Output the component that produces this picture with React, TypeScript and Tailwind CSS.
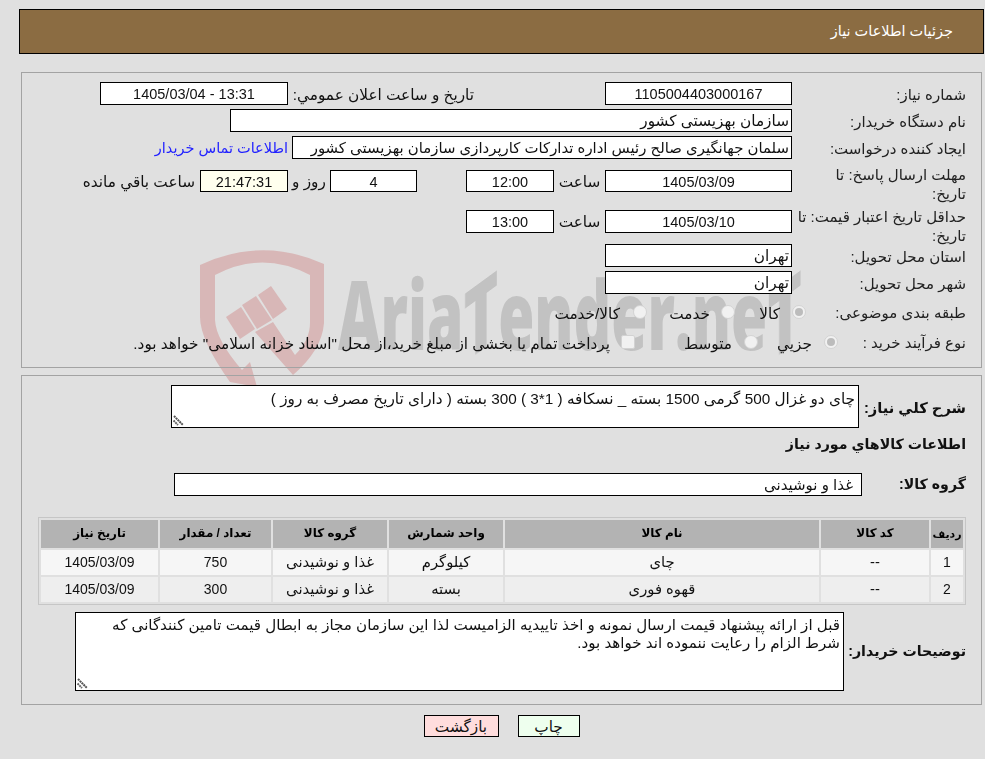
import React from "react";

const font = { fontFamily: '"Liberation Sans","DejaVu Sans",sans-serif' };

function Field({ w, children, align = "text-center", bg = "bg-white", size = "text-[14.5px]" }: { w: string; children?: React.ReactNode; align?: string; bg?: string; size?: string }) {
  return (
    <div className={`${w} ${bg} ${align} ${size} h-full shrink-0 border border-black px-[2px] leading-[22px] whitespace-nowrap overflow-hidden`}>
      {children}
    </div>
  );
}

function Radio({ checked }: { checked?: boolean }) {
  return (
    <span className="relative -mt-[5px] block h-[14px] w-[14px] shrink-0 rounded-full border border-[#d2d2d2] bg-[#f1f1f1]">
      {checked && <span className="absolute left-[2px] top-[2px] block h-[8px] w-[8px] rounded-full bg-[#bcbcbc]" />}
    </span>
  );
}

function Label({ w = "w-[174px]", extra = "", children }: { w?: string; extra?: string; children: React.ReactNode }) {
  return <div className={`${w} ${extra} shrink-0 text-[15px] text-[#222] leading-[19px] pt-[3px]`}>{children}</div>;
}

function Grip() {
  return (
    <svg className="pointer-events-none absolute bottom-[2px] left-[2px]" width="11" height="11" viewBox="0 0 11 11">
      <path d="M1 1 L10 10" stroke="#555" strokeWidth="2" strokeDasharray="2 0.6" />
      <path d="M0.5 5.5 L5 10" stroke="#666" strokeWidth="2" strokeDasharray="2 0.6" />
    </svg>
  );
}

function Watermark() {
  return (
    <div className="pointer-events-none absolute left-0 top-0 h-[400px] w-[985px] overflow-hidden">
      <svg className="absolute left-[190px] top-[240px]" width="150" height="160" viewBox="190 240 150 160">
        <path
          fill="#d8b7b7"
          d="M200 265 Q262 236 324 264 L324 323 Q322 350 293 375 L255 332 L273 322 L295 355 Q310 340 310 323 L310 275 Q262 250 215 275 L215 320 Q216 340 242 370 L250 362 L257 387 L230 382 Q200 340 200 317 Z"
        />
        <polygon fill="#d8b7b7" points="226,317 241,307 255,329 240,339" />
        <polygon fill="#d8b7b7" points="242,305 256,296 272,320 257,329" />
        <polygon fill="#d8b7b7" points="258,295 271,286 287,309 273,319" />
      </svg>
      <div
        dir="ltr"
        className="absolute left-[338px] top-[258px] origin-left scale-x-[0.61] text-[96px] font-extrabold leading-[110px] whitespace-nowrap text-[#c2c2c2]"
        style={{ fontFamily: '"Open Sans",sans-serif' }}
      >
        Aria<span className="inline-block skew-y-[-24deg]">T</span>ender.ne<span className="inline-block skew-y-[-24deg]">T</span>
      </div>
    </div>
  );
}

const cols = ["w-[117px]", "w-[111px]", "w-[114px]", "w-[114px]", "w-[314px]", "w-[108px]", "w-[32px]"].reverse();
const heads = ["ردیف", "کد کالا", "نام کالا", "واحد شمارش", "گروه کالا", "تعداد / مقدار", "تاریخ نیاز"];
const rows = [
  ["1", "--", "چای", "کیلوگرم", "غذا و نوشیدنی", "750", "1405/03/09"],
  ["2", "--", "قهوه فوری", "بسته", "غذا و نوشیدنی", "300", "1405/03/09"],
];

export default function App() {
  return (
    <div dir="rtl" className="relative min-h-[759px] bg-[#e0e0e0] text-[15.3px] text-[#111]" style={font}>
      <Watermark />

      <header className="relative ml-[19px] mr-px h-[45px] translate-y-[9px] border border-black bg-[#8b6c42] pr-[30px] text-[14.5px] leading-[42px] text-white">
        جزئیات اطلاعات نیاز
      </header>

      <section className="relative ml-[21px] mr-[3px] mt-[27px] h-[296px] border border-[#a3a3a3] pr-[15px] pt-[9px]">
        <div className="flex h-[23px]">
          <Label>شماره نیاز:</Label>
          <Field w="w-[187px]">1105004403000167</Field>
          <div className="mr-[131px] w-[181px] shrink-0 whitespace-nowrap pt-[2px]">تاريخ و ساعت اعلان عمومي:</div>
          <div className="mr-[5px] h-full">
            <Field w="w-[188px]">13:31 - 1405/03/04</Field>
          </div>
        </div>
        <div className="mt-[4px] flex h-[23px]">
          <Label>نام دستگاه خریدار:</Label>
          <Field w="w-[562px]" align="text-right" size="text-[15.3px]">سازمان بهزیستی کشور</Field>
        </div>
        <div className="mt-[4px] flex h-[23px]">
          <Label>ایجاد کننده درخواست:</Label>
          <Field w="w-[500px]" align="text-right" size="text-[14.9px]">سلمان جهانگیری صالح رئیس اداره تدارکات کارپردازی سازمان بهزیستی کشور</Field>
          <a className="mr-[4px] whitespace-nowrap pt-[2px] text-[14.5px] text-[#2222ff]">اطلاعات تماس خریدار</a>
        </div>
        <div className="mt-[11px] flex h-[22px]">
          <Label extra="-mt-[8px]">مهلت ارسال پاسخ: تا<br />تاریخ:</Label>
          <Field w="w-[187px]">1405/03/09</Field>
          <div className="w-[51px] shrink-0 pt-[1px] text-center">ساعت</div>
          <Field w="w-[88px]">12:00</Field>
          <div className="mr-[49px] h-full">
            <Field w="w-[87px]">4</Field>
          </div>
          <div className="w-[42px] shrink-0 pt-[1px] text-center">روز و</div>
          <Field w="w-[88px]" bg="bg-[#ffffee]">21:47:31</Field>
          <div className="mr-[5px] whitespace-nowrap pt-[1px]">ساعت باقي مانده</div>
        </div>
        <div className="mt-[18px] flex h-[23px]">
          <Label extra="-mt-[6px]">حداقل تاریخ اعتبار قیمت: تا<br />تاریخ:</Label>
          <Field w="w-[187px]">1405/03/10</Field>
          <div className="w-[51px] shrink-0 pt-[1px] text-center">ساعت</div>
          <Field w="w-[88px]">13:00</Field>
        </div>
        <div className="mt-[11px] flex h-[23px]">
          <Label>استان محل تحویل:</Label>
          <Field w="w-[187px]" align="text-right" size="text-[15.3px]">تهران</Field>
        </div>
        <div className="mt-[4px] flex h-[23px]">
          <Label>شهر محل تحویل:</Label>
          <Field w="w-[187px]" align="text-right" size="text-[15.3px]">تهران</Field>
        </div>
        <div className="mt-[9px] flex h-[22px] items-start">
          <Label w="w-[160px]" extra="-mt-[3px]">طبقه بندی موضوعی:</Label>
          <div className="flex h-full w-[71px] shrink-0 items-center gap-[12px]">
            <Radio checked />
            <span>کالا</span>
          </div>
          <div className="flex h-full w-[88px] shrink-0 items-center gap-[11px]">
            <Radio />
            <span>خدمت</span>
          </div>
          <div className="flex h-full items-center gap-[13px] whitespace-nowrap">
            <Radio />
            <span>کالا/خدمت</span>
          </div>
        </div>
        <div className="mt-[8px] flex h-[22px] items-start">
          <Label w="w-[128px]" extra="-mt-[3px]">نوع فرآیند خرید :</Label>
          <div className="flex h-full w-[80px] shrink-0 items-center gap-[12px]">
            <Radio checked />
            <span>جزيي</span>
          </div>
          <div className="flex h-full w-[123px] shrink-0 items-center gap-[12px]">
            <Radio />
            <span>متوسط</span>
          </div>
          <div className="flex h-full items-center gap-[11px] whitespace-nowrap">
            <span className="-mt-[5px] block h-[14px] w-[14px] shrink-0 rounded-[2px] border border-[#d2d2d2] bg-[#f1f1f1]" />
            <span>پرداخت تمام یا بخشی از مبلغ خرید،از محل "اسناد خزانه اسلامی" خواهد بود.</span>
          </div>
        </div>
      </section>

      <section className="relative ml-[21px] mr-[3px] mt-[7px] h-[330px] border border-[#a3a3a3] pr-[15px] pt-[9px]">
        <div className="flex h-[44px] items-start">
          <div className="w-[107px] shrink-0 pt-[12px] text-[14.7px] font-bold">شرح كلي نياز:</div>
          <div className="relative">
            <textarea
              readOnly
              className="block h-[43px] w-[688px] shrink-0 resize-none border border-black bg-white px-[3px] pb-0 pt-[3px] text-[15.3px] leading-[19px] outline-none"
              style={font}
              defaultValue="چای دو غزال 500 گرمی 1500 بسته _ نسکافه ( 1*3 ) 300 بسته ( دارای تاریخ مصرف به روز )"
            />
            <Grip />
          </div>
        </div>
        <div className="mt-[5px] h-[20px] text-[14.2px] font-bold leading-[20px]">اطلاعات كالاهاي مورد نياز</div>
        <div className="mt-[19px] flex h-[23px] items-center">
          <div className="w-[104px] shrink-0 text-[14.2px] font-bold">گروه کالا:</div>
          <Field w="w-[688px]" align="text-right pr-[8px]" size="text-[15px]">غذا و نوشیدنی</Field>
        </div>

        <table className="ml-0 mt-[21px] w-[928px] table-fixed border-separate border-spacing-[2px] border border-[#c6c6c6] text-center">
          <colgroup>
            {cols.map((c, i) => (
              <col key={i} className={c} />
            ))}
          </colgroup>
          <thead>
            <tr>
              {heads.map((h) => (
                <th key={h} className={`h-[28px] bg-[#b3b3b3] p-0 font-bold text-black ${h === "ردیف" ? "text-[11px]" : "text-[11.9px]"}`}>
                  {h}
                </th>
              ))}
            </tr>
          </thead>
          <tbody>
            {rows.map((r, i) => (
              <tr key={i}>
                {r.map((c, j) => (
                  <td
                    key={j}
                    className={`h-[25px] p-0 ${/[0-9]/.test(c) ? "text-[14px]" : "text-[14.8px]"} ${i === 0 ? "bg-[#f6f6f6]" : "bg-[#eeeeee]"}`}
                  >
                    {c}
                  </td>
                ))}
              </tr>
            ))}
          </tbody>
        </table>

        <div className="mt-[7px] flex h-[79px] items-center">
          <div className="w-[122px] shrink-0 whitespace-nowrap text-[14.2px] font-bold">توضیحات خریدار:</div>
          <div className="relative">
            <textarea
              readOnly
              wrap="off"
              className="block h-[79px] w-[769px] shrink-0 resize-none overflow-hidden border border-black bg-white px-[3px] pb-0 pt-[3px] text-[15.1px] leading-[18px] outline-none"
              style={font}
              defaultValue={"قبل از ارائه پیشنهاد قیمت ارسال نمونه و اخذ تاییدیه الزامیست لذا این سازمان مجاز به ابطال قیمت تامین کنندگانی که\nشرط الزام را رعایت ننموده اند خواهد بود."}
            />
            <Grip />
          </div>
        </div>
      </section>

      <div className="relative mt-[10px] flex justify-center gap-[19px] pl-[18px]">
        <button className="h-[22px] w-[62px] border border-black bg-[#eeffee] text-[15.3px]">چاپ</button>
        <button className="h-[22px] w-[75px] border border-black bg-[#ffdddd] text-[15.3px]">بازگشت</button>
      </div>
    </div>
  );
}
